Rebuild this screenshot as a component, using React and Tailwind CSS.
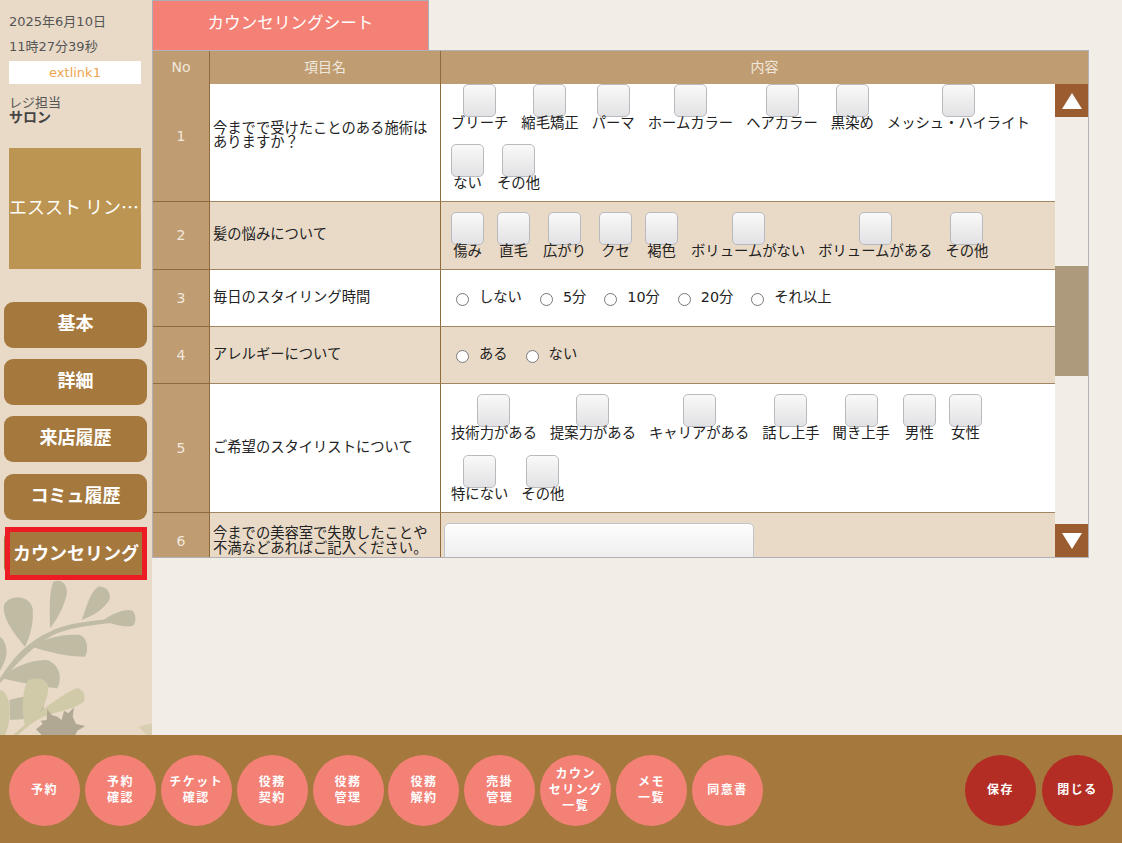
const Check = ({ label }) => (
  <div className="flex flex-col items-center">
    <div className="h-[33px] w-[33px] shrink-0 rounded-[5px] border border-[#b9b9c0] bg-gradient-to-b from-[#f9f9f9] to-[#e2e2e4]" />
    <span className="-mt-[1px] whitespace-nowrap text-[14.33px] leading-[14px] text-[#222]">{label}</span>
  </div>
);

const Checks = ({ items, top = "pt-[10px]", pad = "pl-[10px]", gapY = "gap-y-[15px]" }) => (
  <div className={`flex flex-wrap content-start gap-x-[13px] pr-2 ${gapY} ${top} ${pad}`}>
    {items.map((t) => (
      <Check key={t} label={t} />
    ))}
  </div>
);

const Radios = ({ items }) => (
  <div className="flex items-center pl-[15px]">
    {items.map((t) => (
      <div key={t} className="mr-[18px] flex items-center">
        <input type="radio" readOnly className="m-0 mt-[3px] h-[13px] w-[13px]" />
        <span className="ml-[10px] -mt-[3px] text-[14.3px] leading-[14px] text-[#222]">{t}</span>
      </div>
    ))}
  </div>
);

const Row = ({ no, h, label, beige, children, up, low }) => (
  <div className={`flex shrink-0 ${h} ${beige ? "bg-[#e9dac8]" : "bg-white"}`}>
    <div className={`flex w-[57px] shrink-0 items-center justify-center border-r border-b border-[#8f6a3a] bg-[#bf9c71] text-[14px] text-[#f0e8dc] ${up ? "pb-[12px]" : low ? "pt-[4px]" : ""}`}>
      {no}
    </div>
    <div className={`flex w-[231px] shrink-0 items-center border-r border-b border-r-[#8f6a3a] border-b-[#a08661] pl-[3px] text-[14.3px] leading-[14px] text-[#222] ${up ? "pb-[15px]" : low ? "pt-[3px]" : "pb-[3px]"}`}>
      <span>{label}</span>
    </div>
    <div className="min-w-0 flex-1 border-b border-[#a08661]">{children}</div>
  </div>
);

const SideBtn = ({ children }) => (
  <div className="flex h-[46px] w-[143px] items-center justify-center rounded-[9px] bg-[#a5783e] pb-[3px] text-[18px] font-bold text-white">
    {children}
  </div>
);

const Circle = ({ lines, red }) => (
  <div className={`flex h-[71px] w-[71px] shrink-0 flex-col items-center justify-center rounded-full pb-[1px] text-[12px] font-bold leading-[16px] tracking-[1.5px] text-white ${red ? "bg-[#b32d24]" : "bg-[#f48176]"}`}>
    {lines.map((l) => (
      <span key={l}>{l}</span>
    ))}
  </div>
);

const Leaves = () => (
  <svg viewBox="0 0 456 705" className="absolute bottom-0 left-0 h-[235px] w-[152px]">
    <g fill="#c0bca4">
      <path d="M0 535 C40 470 90 420 150 395 C210 365 300 360 400 352 L402 362 C300 372 210 380 160 405 C100 435 50 490 0 550Z" />
      <path d="M75 440 C40 400 5 350 12 315 C25 285 85 280 98 325 C102 370 90 410 75 440Z" />
      <path d="M150 385 C150 340 145 280 160 245 C185 235 205 255 200 285 C190 325 170 360 150 385Z" />
      <path d="M245 360 C260 320 270 275 295 260 C320 258 335 280 328 300 C310 330 275 350 245 360Z" />
      <path d="M310 360 C340 340 375 325 398 332 C410 345 408 370 398 378 C365 382 335 372 310 360Z" />
      <path d="M95 440 C130 415 190 400 240 405 C265 415 265 455 255 470 C205 470 140 455 95 440Z" />
      <path d="M0 535 C35 505 90 478 140 480 C175 490 190 530 172 565 C115 560 55 545 0 535Z" />
      <path d="M0 410 C18 420 25 455 15 480 C10 495 5 505 0 512Z" />
      <path d="M28 600 C60 590 100 585 135 585 L130 640 C100 655 60 660 30 660Z" />
    </g>
    <g fill="#d0caa9">
      <path d="M75 680 C65 630 65 570 85 540 C110 530 140 535 145 560 C145 600 120 650 75 680Z" />
      <path d="M0 570 C25 575 32 620 28 660 C25 680 20 695 15 705 L0 705Z" />
      <path d="M40 705 C90 660 170 590 230 565 C250 565 258 590 252 605 C215 630 170 635 130 650 C100 665 75 685 55 705Z" />
      <path d="M415 680 L456 670 L456 705 L440 705Z" opacity="0.7" />
    </g>
    <path fill="#b0a892" d="M108 688 L128 672 L122 662 L140 660 L142 628 L155 645 L172 650 L185 660 L192 632 L205 640 L222 622 L218 650 L228 672 L256 678 L232 692 L226 705 L125 705Z" />
  </svg>
);

const Tri = ({ down }) => (
  <svg viewBox="0 0 20 16" className="h-[16px] w-[20px]">
    <path fill="#fff" d={down ? "M0 0H20L10 16Z" : "M10 0L20 16H0Z"} />
  </svg>
);

export default function App() {
  return (
    <div className="flex h-[843px] w-[1122px] flex-col overflow-hidden bg-[#f2ede6] font-['DejaVu_Sans','Noto_Sans_CJK_JP',sans-serif]">
      <div className="flex min-h-0 flex-1">
        <aside className="relative flex w-[152px] shrink-0 flex-col bg-[#e9dac8] px-[9px]">
          <Leaves />
          <div className="relative flex flex-col">
            <div className="mt-[13px] text-[13px] leading-[18px] text-[#555]">2025年6月10日</div>
            <div className="mt-[7px] text-[13px] leading-[18px] text-[#555]">11時27分39秒</div>
            <div className="mt-[5px] flex h-[23px] w-[132px] items-center justify-center bg-white text-[13px] text-[#eea54e]">extlink1</div>
            <div className="mt-[12px] text-[13px] leading-[14px] text-[#555]">レジ担当</div>
            <div className="text-[14px] font-bold leading-[14px] text-[#444]">サロン</div>
            <div className="mt-[24px] flex h-[121px] w-[132px] items-center bg-[#bb9551] pb-[4px] text-[18px] text-white">
              <span className="block w-full truncate text-center font-['Noto_Sans_CJK_JP',sans-serif]">エススト リンクル</span>
            </div>
            <div className="-ml-[5px] mt-[33px] flex flex-col gap-[11px]">
              <SideBtn>基本</SideBtn>
              <SideBtn>詳細</SideBtn>
              <SideBtn>来店履歴</SideBtn>
              <div className="mt-px">
                <SideBtn>コミュ履歴</SideBtn>
              </div>
              <div className="relative -mt-px">
                <SideBtn> </SideBtn>
                <div className="absolute -top-[3px] left-px flex h-[53px] w-[142px] items-center justify-center border-[5px] border-[#ed1c24] bg-[#a5783e] text-[18px] font-bold text-white">
                  カウンセリング
                </div>
              </div>
            </div>
          </div>
        </aside>

        <main className="min-w-0 flex-1">
          <div className="flex h-[51px] w-[277px] items-center justify-center border border-[#a9adb5] bg-[#f48176] pb-[2px] text-[16.6px] text-[#fff]">
            カウンセリングシート
          </div>
          <div className="-mt-px flex h-[508px] w-[937px] flex-col border border-[#b3b1b8]">
            <div className="flex h-[33px] shrink-0 bg-[#bf9c71] text-[14px] text-[#f0e8dc]">
              <div className="flex w-[57px] items-center justify-center border-r border-[#8f6a3a]">No</div>
              <div className="flex w-[231px] items-center justify-center border-r border-[#8f6a3a]">項目名</div>
              <div className="flex flex-1 items-center justify-center">内容</div>
            </div>
            <div className="flex min-h-0 flex-1">
              <div className="flex min-w-0 flex-1 flex-col overflow-hidden">
                <Row no="1" h="h-[118px]" up label="今までで受けたことのある施術はありますか？">
                  <Checks top="pt-0" gapY="gap-y-[14px]" items={["ブリーチ", "縮毛矯正", "パーマ", "ホームカラー", "ヘアカラー", "黒染め", "メッシュ・ハイライト", "ない", "その他"]} />
                </Row>
                <Row no="2" h="h-[68px]" beige label="髪の悩みについて">
                  <Checks items={["傷み", "直毛", "広がり", "クセ", "褐色", "ボリュームがない", "ボリュームがある", "その他"]} />
                </Row>
                <Row no="3" h="h-[57px]" label="毎日のスタイリング時間">
                  <div className="flex h-full items-center">
                    <Radios items={["しない", "5分", "10分", "20分", "それ以上"]} />
                  </div>
                </Row>
                <Row no="4" h="h-[57px]" beige label="アレルギーについて">
                  <div className="flex h-full items-center">
                    <Radios items={["ある", "ない"]} />
                  </div>
                </Row>
                <Row no="5" h="h-[129px]" label="ご希望のスタイリストについて">
                  <Checks items={["技術力がある", "提案力がある", "キャリアがある", "話し上手", "聞き上手", "男性", "女性", "特にない", "その他"]} />
                </Row>
                <Row no="6" h="h-[54px]" beige low label={<span className="block leading-[15px]">今までの美容室で失敗したことや<br />不満などあればご記入ください。</span>}>
                  <div className="pl-[3px] pt-[10px]">
                    <div className="h-[50px] w-[310px] rounded-[5px] border border-[#c4c4c8] bg-gradient-to-b from-[#fdfdfd] to-[#e8e8e8]" />
                  </div>
                </Row>
              </div>
              <div className="flex w-[33px] shrink-0 flex-col bg-[#f2ede6]">
                <div className="flex h-[33px] items-center justify-center bg-[#9b5c30]"><Tri /></div>
                <div className="h-[149px]" />
                <div className="h-[110px] bg-[#ad9a7c]" />
                <div className="flex-1" />
                <div className="flex h-[33px] items-center justify-center bg-[#9b5c30]"><Tri down /></div>
              </div>
            </div>
          </div>
        </main>
      </div>

      <footer className="flex h-[108px] shrink-0 items-start justify-between bg-[#a5783e] pl-[9px] pr-[9px] pt-[20px]">
        <div className="flex gap-[4.9px]">
          <Circle lines={["予約"]} />
          <Circle lines={["予約", "確認"]} />
          <Circle lines={["チケット", "確認"]} />
          <Circle lines={["役務", "契約"]} />
          <Circle lines={["役務", "管理"]} />
          <Circle lines={["役務", "解約"]} />
          <Circle lines={["売掛", "管理"]} />
          <Circle lines={["カウン", "セリング", "一覧"]} />
          <Circle lines={["メモ", "一覧"]} />
          <Circle lines={["同意書"]} />
        </div>
        <div className="flex gap-[6px]">
          <Circle red lines={["保存"]} />
          <Circle red lines={["閉じる"]} />
        </div>
      </footer>
    </div>
  );
}
